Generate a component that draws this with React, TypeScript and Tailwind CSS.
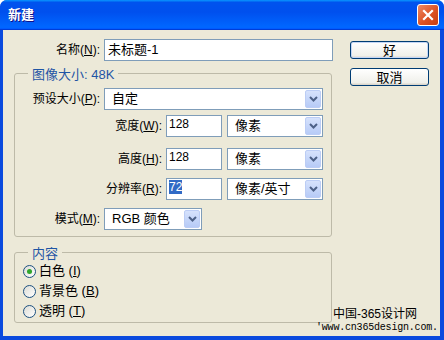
import type { ReactNode } from "react";

const font = "font-['Liberation_Sans','Noto_Sans_CJK_SC',sans-serif]";

function Arrow() {
  return (
    <span className="mr-px flex h-[calc(100%-2px)] w-[16px] items-center justify-center rounded-[2px] border border-[#bccdf5] bg-[linear-gradient(to_bottom,#d6e2fc,#b7cbf7)]">
      <svg width="9" height="6" viewBox="0 0 9 6">
        <polyline
          points="1,1 4.5,4.5 8,1"
          fill="none"
          stroke="#4d6187"
          strokeWidth="2"
        />
      </svg>
    </span>
  );
}

function Select({ value, width }: { value: string; width: string }) {
  return (
    <div
      className={`flex h-[22px] items-center justify-between border border-[#7f9db9] bg-white ${width}`}
    >
      <span className="pl-[7px] text-[13px] text-black">{value}</span>
      <Arrow />
    </div>
  );
}

function NumInput({ value, selected }: { value: string; selected?: boolean }) {
  return (
    <div className="h-[22px] w-[56px] border border-[#7f9db9] bg-white pl-[2px] pt-[1px] text-[12px] leading-[14px] text-black">
      {selected ? (
        <span className="bg-[#316ac5] text-white">{value}</span>
      ) : (
        value
      )}
    </div>
  );
}

function Label({ children, width }: { children: ReactNode; width: string }) {
  return (
    <div className={`pr-[4px] text-right text-[12px] text-black ${width}`}>
      {children}
    </div>
  );
}

function Radio({ label, checked }: { label: ReactNode; checked?: boolean }) {
  return (
    <div className="flex h-[20px] items-center pl-[8px]">
      <span className="flex h-[13px] w-[13px] items-center justify-center rounded-full border border-[#1c5180] bg-[linear-gradient(135deg,#dcdcd5,#ffffff)]">
        {checked ? (
          <span className="h-[5px] w-[5px] rounded-full bg-[#2fa52c]" />
        ) : null}
      </span>
      <span className="ml-[3px] text-[13px] text-black">{label}</span>
    </div>
  );
}

export default function App() {
  return (
    <div
      className={`flex h-[340px] w-[444px] flex-col overflow-hidden rounded-t-[7px] bg-[#0a4ade] ${font}`}
    >
      <div className="flex h-[30px] shrink-0 items-center justify-between bg-[linear-gradient(180deg,#0997ff,#0053ee_8%,#0050ee_40%,#0066ff_88%,#0066ff_93%,#005bff_95%,#003dd7_96%,#003dd7)] pl-[8px] pr-[5px]">
        <span className="text-[13px] font-bold text-white [text-shadow:1px_1px_#0f1089]">
          新建
        </span>
        <button
          type="button"
          aria-label="关闭"
          className="flex h-[22px] w-[22px] items-center justify-center rounded-[3px] border border-white bg-[linear-gradient(to_bottom_right,#ee8a64,#dc5224_55%,#c63e10)]"
        >
          <svg width="12" height="12" viewBox="0 0 12 12">
            <path
              d="M2 2 L10 10 M10 2 L2 10"
              stroke="white"
              strokeWidth="2.2"
              strokeLinecap="square"
            />
          </svg>
        </button>
      </div>

      <div className="relative mb-[4px] ml-[3px] mr-[4px] flex flex-1 bg-[#ece9d8] pl-[11px] pt-[9px]">
        <div className="w-[319px]">
          <div className="flex items-center">
            <Label width="w-[90px]">
              名称(<u>N</u>):
            </Label>
            <div className="flex h-[22px] w-[229px] items-center border border-[#7f9db9] bg-white pl-[3px] text-[13px] text-black">
              未标题-1
            </div>
          </div>

          <div className="relative mt-[12px] w-[318px] rounded-[3px] border border-[#bdbaa8] pb-[6px] pt-[14px]">
            <span className="absolute -top-[9px] left-[13px] bg-[#ece9d8] px-[4px] text-[13px] text-[#1f55a5]">
              图像大小: 48K
            </span>
            <div className="flex items-center">
              <Label width="w-[89px]">
                预设大小(<u>P</u>):
              </Label>
              <Select value="自定" width="w-[219px]" />
            </div>
            <div className="mt-[5px] flex items-center">
              <Label width="w-[151px]">
                宽度(<u>W</u>):
              </Label>
              <NumInput value="128" />
              <div className="ml-[5px]">
                <Select value="像素" width="w-[96px]" />
              </div>
            </div>
            <div className="mt-[11px] flex items-center">
              <Label width="w-[151px]">
                高度(<u>H</u>):
              </Label>
              <NumInput value="128" />
              <div className="ml-[5px]">
                <Select value="像素" width="w-[96px]" />
              </div>
            </div>
            <div className="mt-[8px] flex items-center">
              <Label width="w-[151px]">
                分辨率(<u>R</u>):
              </Label>
              <NumInput value="72" selected />
              <div className="ml-[5px]">
                <Select value="像素/英寸" width="w-[96px]" />
              </div>
            </div>
            <div className="mt-[8px] flex items-center">
              <Label width="w-[89px]">
                模式(<u>M</u>):
              </Label>
              <Select value="RGB 颜色" width="w-[98px]" />
            </div>
          </div>

          <div className="relative mt-[15px] w-[318px] rounded-[3px] border border-[#bdbaa8] pb-[1px] pt-[8px]">
            <span className="absolute -top-[9px] left-[13px] bg-[#ece9d8] px-[4px] text-[13px] text-[#1f55a5]">
              内容
            </span>
            <Radio
              checked
              label={
                <>
                  白色 (<u>I</u>)
                </>
              }
            />
            <Radio
              label={
                <>
                  背景色 (<u>B</u>)
                </>
              }
            />
            <Radio
              label={
                <>
                  透明 (<u>T</u>)
                </>
              }
            />
          </div>
        </div>

        <div className="ml-[17px] flex flex-col gap-[9px] pt-[2px]">
          <button
            type="button"
            className="h-[18px] w-[79px] rounded-[3px] border border-[#003c74] bg-[linear-gradient(to_bottom,#ffffff,#f0f0ea_85%,#d6d0c5)] text-[13px] leading-none text-black shadow-[inset_0_0_0_1px_#c4d6f5]"
          >
            好
          </button>
          <button
            type="button"
            className="h-[18px] w-[79px] rounded-[3px] border border-[#003c74] bg-[linear-gradient(to_bottom,#ffffff,#f0f0ea_85%,#d6d0c5)] text-[13px] leading-none text-black"
          >
            取消
          </button>
        </div>

        <span className="absolute left-[330px] top-[276px] text-[12px] leading-[16px] text-black">
          中国-365设计网
        </span>
        <span className="absolute left-[313px] top-[292px] font-['Liberation_Mono',monospace] text-[10px] leading-[12px] tracking-[-0.2px] text-black">
          'www.cn365design.com.
        </span>
      </div>
    </div>
  );
}
